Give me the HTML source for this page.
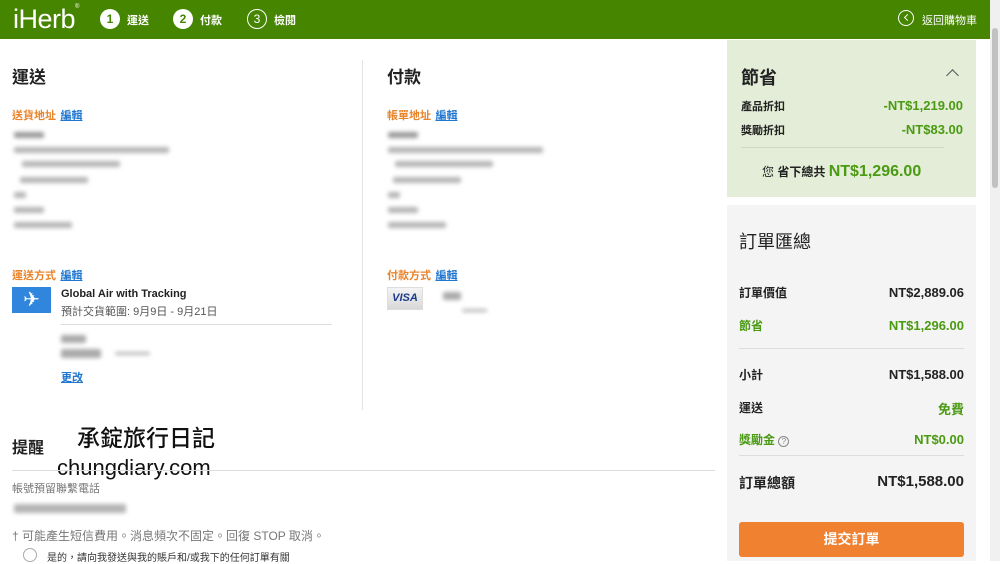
<!DOCTYPE html>
<html><head><meta charset="utf-8"><style>
*{margin:0;padding:0;box-sizing:border-box}
body{width:1000px;height:561px;overflow:hidden;background:#fff;font-family:"Liberation Sans","Noto Sans CJK TC",sans-serif;color:#222;position:relative}
.a{position:absolute;white-space:nowrap}
.hdr{position:absolute;left:0;top:0;width:990px;height:39px;background:#458500;color:#fff}
.circ{position:absolute;width:20px;height:20px;border-radius:50%;font-size:12px;font-weight:bold;text-align:center;line-height:20px}
.or{color:#e8842b;font-size:11px;font-weight:bold}
.lk{color:#1f77d0;font-size:11px;font-weight:bold;text-decoration:underline}
.bl{position:absolute;background:#b5b5b5;filter:blur(2px);height:6px;border-radius:2px}
.g{color:#4a9a12}
.b{font-weight:bold}
</style></head><body>
<div class="hdr">
<div class="a" style="left:13px;top:4px;font-size:27px;letter-spacing:-0.5px">iHerb<span style="font-size:6px;vertical-align:top">®</span></div>
<div class="circ" style="left:100px;top:9px;background:#fff;color:#458500">1</div>
<div class="a b" style="left:127px;top:12px;font-size:11px">運送</div>
<div class="circ" style="left:173px;top:9px;background:#fff;color:#458500">2</div>
<div class="a b" style="left:200px;top:12px;font-size:11px">付款</div>
<div class="circ" style="left:247px;top:9px;border:1px solid #fff;line-height:18px;font-weight:normal">3</div>
<div class="a b" style="left:274px;top:12px;font-size:11px">檢閱</div>
<div class="a" style="left:898px;top:10px;width:16px;height:16px;border:1.3px solid #fff;border-radius:50%"></div>
<div class="a" style="left:905px;top:15px;width:5px;height:5px;border-left:1.3px solid #fff;border-bottom:1.3px solid #fff;transform:rotate(45deg)"></div>
<div class="a" style="left:922px;top:12px;font-size:11px">返回購物車</div>
</div>
<div class="a" style="left:990px;top:0;width:10px;height:561px;background:#f0f0f0"></div>
<div class="a" style="left:992px;top:28px;width:6px;height:160px;background:#c2c2c2;border-radius:3px"></div>

<div class="a b" style="left:12px;top:63px;font-size:17px">運送</div>
<div class="a" style="left:12px;top:106px"><span class="or">送貨地址</span> <span class="lk">編輯</span></div>
<div class="bl" style="left:14px;top:132px;width:30px;background:#999"></div>
<div class="bl" style="left:14px;top:147px;width:155px"></div>
<div class="bl" style="left:22px;top:161px;width:98px"></div>
<div class="bl" style="left:20px;top:177px;width:68px"></div>
<div class="bl" style="left:14px;top:192px;width:12px"></div>
<div class="bl" style="left:14px;top:207px;width:30px"></div>
<div class="bl" style="left:14px;top:222px;width:58px"></div>
<div class="a" style="left:12px;top:266px"><span class="or">運送方式</span> <span class="lk">編輯</span></div>
<div class="a" style="left:12px;top:287px;width:39px;height:26px;background:#2f86dc;color:#fff;font-size:20px;text-align:center;line-height:26px">✈</div>
<div class="a b" style="left:61px;top:288px;font-size:11px">Global Air with Tracking</div>
<div class="a" style="left:61px;top:303px;font-size:11px;color:#555">預計交貨範圍: 9月9日 - 9月21日</div>
<div class="a" style="left:61px;top:324px;width:271px;height:1px;background:#ddd"></div>
<div class="bl" style="left:61px;top:335px;width:25px;background:#aaa;height:8px"></div>
<div class="bl" style="left:61px;top:349px;width:40px;background:#aaa;height:9px"></div>
<div class="bl" style="left:115px;top:352px;width:35px;height:3px"></div>
<div class="a lk" style="left:61px;top:369px">更改</div>
<div class="a" style="left:362px;top:60px;width:1px;height:350px;background:#e3e3e3"></div>

<div class="a b" style="left:387px;top:63px;font-size:17px">付款</div>
<div class="a" style="left:387px;top:106px"><span class="or">帳單地址</span> <span class="lk">編輯</span></div>
<div class="bl" style="left:388px;top:132px;width:30px;background:#999"></div>
<div class="bl" style="left:388px;top:147px;width:155px"></div>
<div class="bl" style="left:395px;top:161px;width:98px"></div>
<div class="bl" style="left:393px;top:177px;width:68px"></div>
<div class="bl" style="left:388px;top:192px;width:12px"></div>
<div class="bl" style="left:388px;top:207px;width:30px"></div>
<div class="bl" style="left:388px;top:222px;width:58px"></div>
<div class="a" style="left:387px;top:266px"><span class="or">付款方式</span> <span class="lk">編輯</span></div>
<div class="a" style="left:387px;top:287px;width:36px;height:23px;background:linear-gradient(#f4f4f4,#d8d8d8);border:1px solid #ddd;color:#1a3a8c;font-weight:bold;font-style:italic;font-size:11px;text-align:center;line-height:21px">VISA</div>
<div class="bl" style="left:443px;top:292px;width:18px;background:#aaa;height:8px"></div>
<div class="bl" style="left:462px;top:309px;width:25px;height:3px"></div>

<div class="a b" style="left:12px;top:434px;font-size:16px">提醒</div>
<div class="a" style="left:77px;top:419px;font-size:23px;color:#111;font-weight:500">承錠旅行日記</div>
<div class="a" style="left:57px;top:455px;font-size:22px;color:#111">chungdiary.com</div>
<div class="a" style="left:12px;top:470px;width:703px;height:1px;background:#ddd"></div>
<div class="a" style="left:12px;top:480px;font-size:11px;color:#777">帳號預留聯繫電話</div>
<div class="bl" style="left:14px;top:504px;width:112px;height:9px"></div>
<div class="a" style="left:12px;top:527px;font-size:12px;color:#777">† 可能產生短信費用。消息頻次不固定。回復 STOP 取消。</div>
<div class="a" style="left:23px;top:548px;width:14px;height:14px;border:1px solid #aaa;border-radius:50%"></div>
<div class="a" style="left:47px;top:549px;font-size:10px;color:#333">是的，請向我發送與我的賬戶和/或我下的任何訂單有關</div>

<div class="a" style="left:727px;top:40px;width:249px;height:157px;background:#e3edd7"></div>
<div class="a b" style="left:741px;top:64px;font-size:18px">節省</div>
<div class="a" style="left:948px;top:71px;width:9px;height:9px;border-left:1.5px solid #555;border-top:1.5px solid #555;transform:rotate(45deg)"></div>
<div class="a b" style="left:741px;top:98px;font-size:11px">產品折扣</div>
<div class="a b g" style="right:37px;top:98px;font-size:13px">-NT$1,219.00</div>
<div class="a b" style="left:741px;top:122px;font-size:11px">獎勵折扣</div>
<div class="a b g" style="right:37px;top:122px;font-size:13px">-NT$83.00</div>
<div class="a" style="left:741px;top:147px;width:203px;height:1px;background:#cfd9c3"></div>
<div class="a" style="left:762px;top:163px;font-size:12px"><span>您</span> <b>省下總共</b> <b class="g" style="font-size:16px">NT$1,296.00</b></div>

<div class="a" style="left:727px;top:205px;width:249px;height:356px;background:#f4f4f4"></div>
<div class="a" style="left:739px;top:228px;font-size:18px">訂單匯總</div>
<div class="a b" style="left:739px;top:284px;font-size:12px">訂單價值</div>
<div class="a b" style="right:36px;top:285px;font-size:13px">NT$2,889.06</div>
<div class="a b g" style="left:739px;top:317px;font-size:12px">節省</div>
<div class="a b g" style="right:36px;top:318px;font-size:13px">NT$1,296.00</div>
<div class="a" style="left:739px;top:348px;width:225px;height:1px;background:#ddd"></div>
<div class="a b" style="left:739px;top:366px;font-size:12px">小計</div>
<div class="a b" style="right:36px;top:367px;font-size:13px">NT$1,588.00</div>
<div class="a b" style="left:739px;top:399px;font-size:12px">運送</div>
<div class="a b g" style="right:36px;top:399px;font-size:13px">免費</div>
<div class="a b g" style="left:739px;top:431px;font-size:12px">獎勵金 <span style="display:inline-block;width:11px;height:11px;border:1px solid #888;border-radius:50%;font-size:8px;color:#888;text-align:center;line-height:9px;font-weight:normal">?</span></div>
<div class="a b g" style="right:36px;top:432px;font-size:13px">NT$0.00</div>
<div class="a" style="left:739px;top:455px;width:225px;height:1px;background:#ddd"></div>
<div class="a b" style="left:739px;top:473px;font-size:14px">訂單總額</div>
<div class="a b" style="right:36px;top:473px;font-size:15px">NT$1,588.00</div>
<div class="a b" style="left:739px;top:522px;width:225px;height:35px;background:#ef8130;border-radius:3px;color:#fff;font-size:14px;text-align:center;line-height:35px">提交訂單</div>
</body></html>
